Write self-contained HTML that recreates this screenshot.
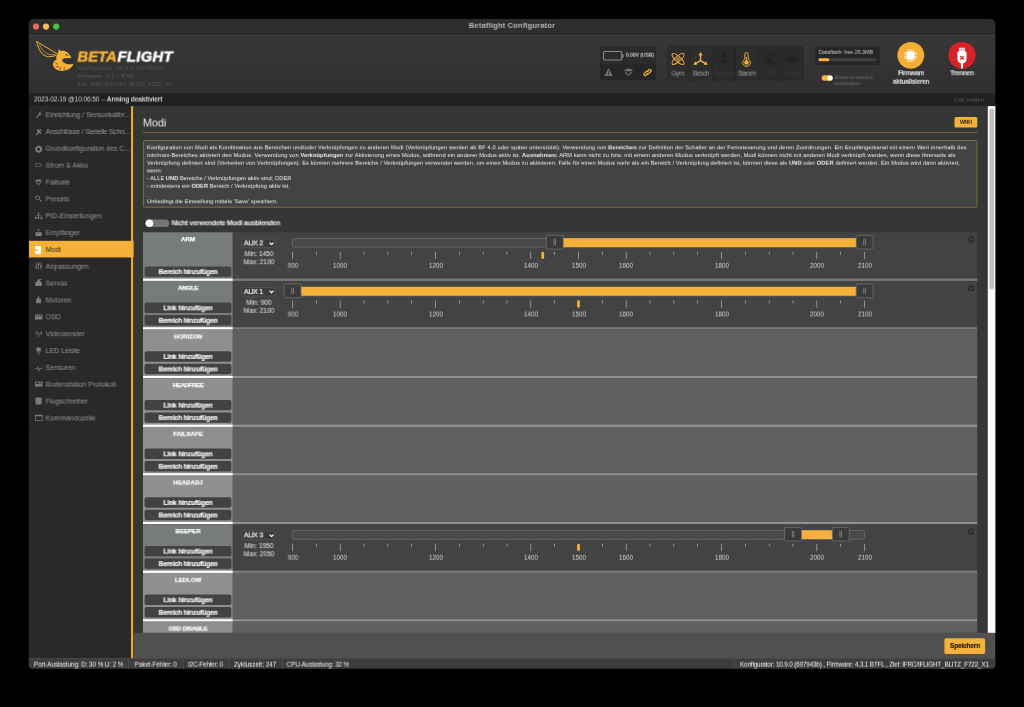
<!DOCTYPE html>
<html lang="de"><head><meta charset="utf-8"><title>Betaflight Configurator</title>
<style>
html,body{margin:0;padding:0;background:#000;width:1024px;height:707px;overflow:hidden}
body{font-family:"Liberation Sans",sans-serif;-webkit-font-smoothing:antialiased}
#w{position:absolute;left:0;top:0;width:1024px;height:707px;overflow:hidden;will-change:transform}
#w div,#w span,#w svg{position:absolute;display:block}
#w span.t{white-space:nowrap;font-family:"Liberation Sans",sans-serif}
#w span.t b{font-weight:700}

</style></head><body>
<div id="w">
<svg id="bg" width="1024" height="707" viewBox="0 0 1024 707" style="left:0;top:0"><defs><linearGradient id="g0" x1="0" y1="0" x2="0" y2="1"><stop offset="0" stop-color="#373737"/><stop offset="1" stop-color="#303030"/></linearGradient><clipPath id="wc"><path d="M33.7 19.0 H990.4 A5.0 5.0 0 0 1 995.4 24.0 V664.8 A4.0 4.0 0 0 1 991.4 668.8 H32.7 A4.0 4.0 0 0 1 28.7 664.8 V24.0 A5.0 5.0 0 0 1 33.7 19.0 Z"/></clipPath></defs>
<g clip-path="url(#wc)">
<rect x="28.00" y="19.00" width="968.00" height="15.00" fill="#2e2e2e"/>
<rect x="28.00" y="33.20" width="968.00" height="1.00" fill="#1f1f1f"/>
<rect x="28.00" y="34.00" width="968.00" height="59.00" fill="url(#g0)"/>
<rect x="28.00" y="93.00" width="968.00" height="13.10" fill="#212121"/>
<rect x="28.00" y="106.10" width="103.00" height="552.00" fill="#292929"/>
<rect x="131.00" y="106.10" width="2.40" height="552.00" fill="#e8ab3a"/>
<rect x="133.60" y="106.10" width="854.00" height="527.00" fill="#353736"/>
<rect x="987.70" y="106.10" width="9.00" height="527.00" fill="#fafafa"/>
<rect x="989.40" y="108.50" width="4.80" height="181.00" rx="2.50" fill="#c1c1c1"/>
<rect x="133.60" y="632.80" width="862.00" height="25.40" fill="#505050"/>
<rect x="28.00" y="658.10" width="968.00" height="11.00" fill="#3d3d3d"/>
<rect x="28.00" y="658.10" width="968.00" height="0.60" fill="#555"/>
<rect x="32.90" y="23.50" width="6.20" height="6.20" rx="3.10" fill="#ed6a5e"/>
<rect x="42.90" y="23.50" width="6.20" height="6.20" rx="3.10" fill="#f4bf4f"/>
<rect x="53.10" y="23.50" width="6.20" height="6.20" rx="3.10" fill="#45c13f"/>
<rect x="600.20" y="46.20" width="55.80" height="33.80" rx="2.50" fill="#2b2b2b"/>
<path d="M600.20 64.50 H656.00 V77.50 A2.50 2.50 0 0 1 653.50 80.00 H602.70 A2.50 2.50 0 0 1 600.20 77.50 V64.50 Z" fill="#262626"/>
<rect x="603.55" y="51.55" width="18.20" height="8.50" rx="1.05" fill="none" stroke="#8a8a8a" stroke-width="1.1"/>
<path d="M622.20 54.00 H622.60 A1.00 1.00 0 0 1 623.60 55.00 V56.60 A1.00 1.00 0 0 1 622.60 57.60 H622.20 V54.00 Z" fill="#8a8a8a"/>
<rect x="666.80" y="45.80" width="137.00" height="34.90" rx="2.50" fill="#2a2a2a"/>
<path d="M669.50 45.80 H689.80 V80.70 H669.50 A2.50 2.50 0 0 1 667.00 78.20 V48.30 A2.50 2.50 0 0 1 669.50 45.80 Z" fill="#2d2d2d"/>
<rect x="689.83" y="45.80" width="22.80" height="34.90" fill="#2d2d2d"/>
<rect x="689.63" y="45.80" width="0.60" height="34.90" fill="#222"/>
<rect x="690.23" y="45.80" width="0.50" height="34.90" fill="#323232"/>
<rect x="712.46" y="45.80" width="0.60" height="34.90" fill="#222"/>
<rect x="713.06" y="45.80" width="0.50" height="34.90" fill="#323232"/>
<rect x="735.49" y="45.80" width="22.80" height="34.90" fill="#2d2d2d"/>
<rect x="735.29" y="45.80" width="0.60" height="34.90" fill="#222"/>
<rect x="735.89" y="45.80" width="0.50" height="34.90" fill="#323232"/>
<rect x="758.12" y="45.80" width="0.60" height="34.90" fill="#222"/>
<rect x="758.72" y="45.80" width="0.50" height="34.90" fill="#323232"/>
<rect x="780.95" y="45.80" width="0.60" height="34.90" fill="#222"/>
<rect x="781.55" y="45.80" width="0.50" height="34.90" fill="#323232"/>
<rect x="815.20" y="46.70" width="64.50" height="18.40" rx="2.50" fill="#262626"/>
<rect x="818.40" y="58.20" width="58.00" height="3.00" rx="1.50" fill="#414141"/>
<rect x="818.40" y="58.20" width="10.80" height="3.00" rx="1.50" fill="#f5b13a"/>
<rect x="821.60" y="75.20" width="11.20" height="5.50" rx="2.80" fill="#f5b13a"/>
<rect x="827.40" y="75.40" width="5.20" height="5.10" rx="2.55" fill="#fff"/>
<rect x="897.40" y="41.90" width="26.80" height="26.80" rx="13.40" fill="#f4ae33"/>
<rect x="948.40" y="41.90" width="27.20" height="26.80" rx="13.40" fill="#d7222a"/>
<rect x="29.00" y="106.30" width="102.00" height="0.50" fill="#313131"/>
<rect x="29.00" y="122.55" width="102.00" height="0.60" fill="#272727"/>
<rect x="29.00" y="123.15" width="102.00" height="0.50" fill="#313131"/>
<rect x="29.00" y="139.40" width="102.00" height="0.60" fill="#272727"/>
<rect x="29.00" y="140.00" width="102.00" height="0.50" fill="#313131"/>
<rect x="29.00" y="156.25" width="102.00" height="0.60" fill="#272727"/>
<rect x="29.00" y="156.85" width="102.00" height="0.50" fill="#313131"/>
<rect x="29.00" y="173.10" width="102.00" height="0.60" fill="#272727"/>
<rect x="29.00" y="173.70" width="102.00" height="0.50" fill="#313131"/>
<rect x="29.00" y="189.95" width="102.00" height="0.60" fill="#272727"/>
<rect x="29.00" y="190.55" width="102.00" height="0.50" fill="#313131"/>
<rect x="29.00" y="206.80" width="102.00" height="0.60" fill="#272727"/>
<rect x="29.00" y="207.40" width="102.00" height="0.50" fill="#313131"/>
<rect x="29.00" y="223.65" width="102.00" height="0.60" fill="#272727"/>
<rect x="29.00" y="224.25" width="102.00" height="0.50" fill="#313131"/>
<rect x="29.00" y="240.50" width="102.00" height="0.60" fill="#272727"/>
<rect x="29.00" y="240.80" width="104.60" height="16.65" fill="#f5b13a"/>
<rect x="29.00" y="257.95" width="102.00" height="0.50" fill="#313131"/>
<rect x="29.00" y="274.20" width="102.00" height="0.60" fill="#272727"/>
<rect x="29.00" y="274.80" width="102.00" height="0.50" fill="#313131"/>
<rect x="29.00" y="291.05" width="102.00" height="0.60" fill="#272727"/>
<rect x="29.00" y="291.65" width="102.00" height="0.50" fill="#313131"/>
<rect x="29.00" y="307.90" width="102.00" height="0.60" fill="#272727"/>
<rect x="29.00" y="308.50" width="102.00" height="0.50" fill="#313131"/>
<rect x="29.00" y="324.75" width="102.00" height="0.60" fill="#272727"/>
<rect x="29.00" y="325.35" width="102.00" height="0.50" fill="#313131"/>
<rect x="29.00" y="341.60" width="102.00" height="0.60" fill="#272727"/>
<rect x="29.00" y="342.20" width="102.00" height="0.50" fill="#313131"/>
<rect x="29.00" y="358.45" width="102.00" height="0.60" fill="#272727"/>
<rect x="29.00" y="359.05" width="102.00" height="0.50" fill="#313131"/>
<rect x="29.00" y="375.30" width="102.00" height="0.60" fill="#272727"/>
<rect x="29.00" y="375.90" width="102.00" height="0.50" fill="#313131"/>
<rect x="29.00" y="392.15" width="102.00" height="0.60" fill="#272727"/>
<rect x="29.00" y="392.75" width="102.00" height="0.50" fill="#313131"/>
<rect x="29.00" y="409.00" width="102.00" height="0.60" fill="#272727"/>
<rect x="29.00" y="409.60" width="102.00" height="0.50" fill="#313131"/>
<rect x="29.00" y="425.85" width="102.00" height="0.60" fill="#272727"/>
<rect x="143.00" y="132.30" width="834.30" height="0.70" fill="#8f7432"/>
<rect x="954.50" y="117.10" width="22.80" height="10.50" rx="1.50" fill="#f5b13a"/>
<rect x="143.35" y="140.55" width="833.70" height="66.70" rx="1.15" fill="#434343" stroke="#938242" stroke-width="0.7"/>
<rect x="145.50" y="219.40" width="23.80" height="7.60" rx="3.80" fill="#757575"/>
<rect x="145.60" y="219.40" width="7.60" height="7.60" rx="3.80" fill="#fff"/>
<rect x="143.00" y="232.30" width="89.80" height="46.10" fill="#777c7a"/>
<rect x="232.80" y="232.30" width="744.40" height="48.70" fill="#434343"/>
<rect x="143.00" y="278.45" width="89.80" height="2.45" fill="#fff"/>
<rect x="232.80" y="278.60" width="744.40" height="2.30" fill="rgba(255,255,255,0.3)"/>
<rect x="144.60" y="266.40" width="86.80" height="10.40" rx="1.80" fill="#424242"/>
<rect x="241.60" y="239.00" width="33.30" height="8.30" rx="1.50" fill="#3a3a3a" stroke="#606060" stroke-width="0.6"/>
<rect x="292.50" y="238.50" width="572.20" height="8.70" rx="1.50" fill="#494949" stroke="#7b7b7b" stroke-width="0.6"/>
<rect x="554.67" y="238.20" width="309.84" height="8.90" fill="#f5b13a"/>
<rect x="546.32" y="235.35" width="16.90" height="13.70" rx="1.45" fill="#3b3b3b" stroke="#767676" stroke-width="0.7"/>
<rect x="553.57" y="238.90" width="0.80" height="6.40" fill="#8a8a8a"/>
<rect x="555.17" y="238.90" width="0.80" height="6.40" fill="#8a8a8a"/>
<rect x="856.15" y="235.35" width="16.90" height="13.70" rx="1.45" fill="#3b3b3b" stroke="#767676" stroke-width="0.7"/>
<rect x="863.40" y="238.90" width="0.80" height="6.40" fill="#8a8a8a"/>
<rect x="865.00" y="238.90" width="0.80" height="6.40" fill="#8a8a8a"/>
<rect x="292.20" y="251.80" width="0.60" height="7.40" fill="#c6c6c6"/>
<rect x="316.03" y="251.80" width="0.60" height="2.90" fill="#c6c6c6"/>
<rect x="339.87" y="251.80" width="0.60" height="7.40" fill="#c6c6c6"/>
<rect x="363.70" y="251.80" width="0.60" height="2.90" fill="#c6c6c6"/>
<rect x="387.53" y="251.80" width="0.60" height="2.90" fill="#c6c6c6"/>
<rect x="411.37" y="251.80" width="0.60" height="2.90" fill="#c6c6c6"/>
<rect x="435.20" y="251.80" width="0.60" height="7.40" fill="#c6c6c6"/>
<rect x="459.03" y="251.80" width="0.60" height="2.90" fill="#c6c6c6"/>
<rect x="482.87" y="251.80" width="0.60" height="2.90" fill="#c6c6c6"/>
<rect x="506.70" y="251.80" width="0.60" height="2.90" fill="#c6c6c6"/>
<rect x="530.54" y="251.80" width="0.60" height="7.40" fill="#c6c6c6"/>
<rect x="554.37" y="251.80" width="0.60" height="2.90" fill="#c6c6c6"/>
<rect x="578.20" y="251.80" width="0.60" height="7.40" fill="#c6c6c6"/>
<rect x="602.04" y="251.80" width="0.60" height="2.90" fill="#c6c6c6"/>
<rect x="625.87" y="251.80" width="0.60" height="7.40" fill="#c6c6c6"/>
<rect x="649.70" y="251.80" width="0.60" height="2.90" fill="#c6c6c6"/>
<rect x="673.54" y="251.80" width="0.60" height="2.90" fill="#c6c6c6"/>
<rect x="697.37" y="251.80" width="0.60" height="2.90" fill="#c6c6c6"/>
<rect x="721.20" y="251.80" width="0.60" height="7.40" fill="#c6c6c6"/>
<rect x="745.04" y="251.80" width="0.60" height="2.90" fill="#c6c6c6"/>
<rect x="768.87" y="251.80" width="0.60" height="2.90" fill="#c6c6c6"/>
<rect x="792.70" y="251.80" width="0.60" height="2.90" fill="#c6c6c6"/>
<rect x="816.54" y="251.80" width="0.60" height="7.40" fill="#c6c6c6"/>
<rect x="840.37" y="251.80" width="0.60" height="2.90" fill="#c6c6c6"/>
<rect x="864.20" y="251.80" width="0.60" height="7.40" fill="#c6c6c6"/>
<rect x="541.35" y="251.70" width="2.80" height="7.20" rx="1.40" fill="#f5b13a"/>
<rect x="143.00" y="280.97" width="89.80" height="46.10" fill="#777c7a"/>
<rect x="232.80" y="280.97" width="744.40" height="48.70" fill="#434343"/>
<rect x="143.00" y="327.12" width="89.80" height="2.45" fill="#fff"/>
<rect x="232.80" y="327.27" width="744.40" height="2.30" fill="rgba(255,255,255,0.3)"/>
<rect x="144.60" y="302.57" width="86.80" height="10.40" rx="1.80" fill="#424242"/>
<rect x="144.60" y="315.07" width="86.80" height="10.40" rx="1.80" fill="#424242"/>
<rect x="241.60" y="287.67" width="33.30" height="8.30" rx="1.50" fill="#3a3a3a" stroke="#606060" stroke-width="0.6"/>
<rect x="292.50" y="287.17" width="572.20" height="8.70" rx="1.50" fill="#494949" stroke="#7b7b7b" stroke-width="0.6"/>
<rect x="292.50" y="286.87" width="572.00" height="8.90" fill="#f5b13a"/>
<rect x="284.15" y="284.02" width="16.90" height="13.70" rx="1.45" fill="#3b3b3b" stroke="#767676" stroke-width="0.7"/>
<rect x="291.40" y="287.57" width="0.80" height="6.40" fill="#8a8a8a"/>
<rect x="293.00" y="287.57" width="0.80" height="6.40" fill="#8a8a8a"/>
<rect x="856.15" y="284.02" width="16.90" height="13.70" rx="1.45" fill="#3b3b3b" stroke="#767676" stroke-width="0.7"/>
<rect x="863.40" y="287.57" width="0.80" height="6.40" fill="#8a8a8a"/>
<rect x="865.00" y="287.57" width="0.80" height="6.40" fill="#8a8a8a"/>
<rect x="292.20" y="300.47" width="0.60" height="7.40" fill="#c6c6c6"/>
<rect x="316.03" y="300.47" width="0.60" height="2.90" fill="#c6c6c6"/>
<rect x="339.87" y="300.47" width="0.60" height="7.40" fill="#c6c6c6"/>
<rect x="363.70" y="300.47" width="0.60" height="2.90" fill="#c6c6c6"/>
<rect x="387.53" y="300.47" width="0.60" height="2.90" fill="#c6c6c6"/>
<rect x="411.37" y="300.47" width="0.60" height="2.90" fill="#c6c6c6"/>
<rect x="435.20" y="300.47" width="0.60" height="7.40" fill="#c6c6c6"/>
<rect x="459.03" y="300.47" width="0.60" height="2.90" fill="#c6c6c6"/>
<rect x="482.87" y="300.47" width="0.60" height="2.90" fill="#c6c6c6"/>
<rect x="506.70" y="300.47" width="0.60" height="2.90" fill="#c6c6c6"/>
<rect x="530.54" y="300.47" width="0.60" height="7.40" fill="#c6c6c6"/>
<rect x="554.37" y="300.47" width="0.60" height="2.90" fill="#c6c6c6"/>
<rect x="578.20" y="300.47" width="0.60" height="7.40" fill="#c6c6c6"/>
<rect x="602.04" y="300.47" width="0.60" height="2.90" fill="#c6c6c6"/>
<rect x="625.87" y="300.47" width="0.60" height="7.40" fill="#c6c6c6"/>
<rect x="649.70" y="300.47" width="0.60" height="2.90" fill="#c6c6c6"/>
<rect x="673.54" y="300.47" width="0.60" height="2.90" fill="#c6c6c6"/>
<rect x="697.37" y="300.47" width="0.60" height="2.90" fill="#c6c6c6"/>
<rect x="721.20" y="300.47" width="0.60" height="7.40" fill="#c6c6c6"/>
<rect x="745.04" y="300.47" width="0.60" height="2.90" fill="#c6c6c6"/>
<rect x="768.87" y="300.47" width="0.60" height="2.90" fill="#c6c6c6"/>
<rect x="792.70" y="300.47" width="0.60" height="2.90" fill="#c6c6c6"/>
<rect x="816.54" y="300.47" width="0.60" height="7.40" fill="#c6c6c6"/>
<rect x="840.37" y="300.47" width="0.60" height="2.90" fill="#c6c6c6"/>
<rect x="864.20" y="300.47" width="0.60" height="7.40" fill="#c6c6c6"/>
<rect x="577.10" y="300.37" width="2.80" height="7.20" rx="1.40" fill="#f5b13a"/>
<rect x="143.00" y="329.64" width="89.80" height="46.10" fill="#8f8f8f"/>
<rect x="232.80" y="329.64" width="744.40" height="48.70" fill="#606060"/>
<rect x="143.00" y="375.79" width="89.80" height="2.45" fill="#fff"/>
<rect x="232.80" y="375.94" width="744.40" height="2.30" fill="rgba(255,255,255,0.3)"/>
<rect x="144.60" y="351.24" width="86.80" height="10.40" rx="1.80" fill="#424242"/>
<rect x="144.60" y="363.74" width="86.80" height="10.40" rx="1.80" fill="#424242"/>
<rect x="143.00" y="378.31" width="89.80" height="46.10" fill="#8f8f8f"/>
<rect x="232.80" y="378.31" width="744.40" height="48.70" fill="#606060"/>
<rect x="143.00" y="424.46" width="89.80" height="2.45" fill="#fff"/>
<rect x="232.80" y="424.61" width="744.40" height="2.30" fill="rgba(255,255,255,0.3)"/>
<rect x="144.60" y="399.91" width="86.80" height="10.40" rx="1.80" fill="#424242"/>
<rect x="144.60" y="412.41" width="86.80" height="10.40" rx="1.80" fill="#424242"/>
<rect x="143.00" y="426.98" width="89.80" height="46.10" fill="#8f8f8f"/>
<rect x="232.80" y="426.98" width="744.40" height="48.70" fill="#606060"/>
<rect x="143.00" y="473.13" width="89.80" height="2.45" fill="#fff"/>
<rect x="232.80" y="473.28" width="744.40" height="2.30" fill="rgba(255,255,255,0.3)"/>
<rect x="144.60" y="448.58" width="86.80" height="10.40" rx="1.80" fill="#424242"/>
<rect x="144.60" y="461.08" width="86.80" height="10.40" rx="1.80" fill="#424242"/>
<rect x="143.00" y="475.65" width="89.80" height="46.10" fill="#8f8f8f"/>
<rect x="232.80" y="475.65" width="744.40" height="48.70" fill="#606060"/>
<rect x="143.00" y="521.80" width="89.80" height="2.45" fill="#fff"/>
<rect x="232.80" y="521.95" width="744.40" height="2.30" fill="rgba(255,255,255,0.3)"/>
<rect x="144.60" y="497.25" width="86.80" height="10.40" rx="1.80" fill="#424242"/>
<rect x="144.60" y="509.75" width="86.80" height="10.40" rx="1.80" fill="#424242"/>
<rect x="143.00" y="524.32" width="89.80" height="46.10" fill="#777c7a"/>
<rect x="232.80" y="524.32" width="744.40" height="48.70" fill="#434343"/>
<rect x="143.00" y="570.47" width="89.80" height="2.45" fill="#fff"/>
<rect x="232.80" y="570.62" width="744.40" height="2.30" fill="rgba(255,255,255,0.3)"/>
<rect x="144.60" y="545.92" width="86.80" height="10.40" rx="1.80" fill="#424242"/>
<rect x="144.60" y="558.42" width="86.80" height="10.40" rx="1.80" fill="#424242"/>
<rect x="241.60" y="531.02" width="33.30" height="8.30" rx="1.50" fill="#3a3a3a" stroke="#606060" stroke-width="0.6"/>
<rect x="292.50" y="530.52" width="572.20" height="8.70" rx="1.50" fill="#494949" stroke="#7b7b7b" stroke-width="0.6"/>
<rect x="793.00" y="530.22" width="47.67" height="8.90" fill="#f5b13a"/>
<rect x="784.65" y="527.37" width="16.90" height="13.70" rx="1.45" fill="#3b3b3b" stroke="#767676" stroke-width="0.7"/>
<rect x="791.90" y="530.92" width="0.80" height="6.40" fill="#8a8a8a"/>
<rect x="793.50" y="530.92" width="0.80" height="6.40" fill="#8a8a8a"/>
<rect x="832.32" y="527.37" width="16.90" height="13.70" rx="1.45" fill="#3b3b3b" stroke="#767676" stroke-width="0.7"/>
<rect x="839.57" y="530.92" width="0.80" height="6.40" fill="#8a8a8a"/>
<rect x="841.17" y="530.92" width="0.80" height="6.40" fill="#8a8a8a"/>
<rect x="292.20" y="543.82" width="0.60" height="7.40" fill="#c6c6c6"/>
<rect x="316.03" y="543.82" width="0.60" height="2.90" fill="#c6c6c6"/>
<rect x="339.87" y="543.82" width="0.60" height="7.40" fill="#c6c6c6"/>
<rect x="363.70" y="543.82" width="0.60" height="2.90" fill="#c6c6c6"/>
<rect x="387.53" y="543.82" width="0.60" height="2.90" fill="#c6c6c6"/>
<rect x="411.37" y="543.82" width="0.60" height="2.90" fill="#c6c6c6"/>
<rect x="435.20" y="543.82" width="0.60" height="7.40" fill="#c6c6c6"/>
<rect x="459.03" y="543.82" width="0.60" height="2.90" fill="#c6c6c6"/>
<rect x="482.87" y="543.82" width="0.60" height="2.90" fill="#c6c6c6"/>
<rect x="506.70" y="543.82" width="0.60" height="2.90" fill="#c6c6c6"/>
<rect x="530.54" y="543.82" width="0.60" height="7.40" fill="#c6c6c6"/>
<rect x="554.37" y="543.82" width="0.60" height="2.90" fill="#c6c6c6"/>
<rect x="578.20" y="543.82" width="0.60" height="7.40" fill="#c6c6c6"/>
<rect x="602.04" y="543.82" width="0.60" height="2.90" fill="#c6c6c6"/>
<rect x="625.87" y="543.82" width="0.60" height="7.40" fill="#c6c6c6"/>
<rect x="649.70" y="543.82" width="0.60" height="2.90" fill="#c6c6c6"/>
<rect x="673.54" y="543.82" width="0.60" height="2.90" fill="#c6c6c6"/>
<rect x="697.37" y="543.82" width="0.60" height="2.90" fill="#c6c6c6"/>
<rect x="721.20" y="543.82" width="0.60" height="7.40" fill="#c6c6c6"/>
<rect x="745.04" y="543.82" width="0.60" height="2.90" fill="#c6c6c6"/>
<rect x="768.87" y="543.82" width="0.60" height="2.90" fill="#c6c6c6"/>
<rect x="792.70" y="543.82" width="0.60" height="2.90" fill="#c6c6c6"/>
<rect x="816.54" y="543.82" width="0.60" height="7.40" fill="#c6c6c6"/>
<rect x="840.37" y="543.82" width="0.60" height="2.90" fill="#c6c6c6"/>
<rect x="864.20" y="543.82" width="0.60" height="7.40" fill="#c6c6c6"/>
<rect x="577.10" y="543.72" width="2.80" height="7.20" rx="1.40" fill="#f5b13a"/>
<rect x="143.00" y="572.99" width="89.80" height="46.10" fill="#8f8f8f"/>
<rect x="232.80" y="572.99" width="744.40" height="48.70" fill="#606060"/>
<rect x="143.00" y="619.14" width="89.80" height="2.45" fill="#fff"/>
<rect x="232.80" y="619.29" width="744.40" height="2.30" fill="rgba(255,255,255,0.3)"/>
<rect x="144.60" y="594.59" width="86.80" height="10.40" rx="1.80" fill="#424242"/>
<rect x="144.60" y="607.09" width="86.80" height="10.40" rx="1.80" fill="#424242"/>
<rect x="143.00" y="621.66" width="89.80" height="11.14" fill="#8f8f8f"/>
<rect x="232.80" y="621.66" width="744.40" height="11.14" fill="#606060"/>
<rect x="944.40" y="638.20" width="40.70" height="15.80" rx="1.80" fill="#f5b13a"/>
<rect x="128.50" y="658.60" width="0.60" height="10.40" fill="#5a5a5a"/>
<rect x="182.60" y="658.60" width="0.60" height="10.40" fill="#5a5a5a"/>
<rect x="228.80" y="658.60" width="0.60" height="10.40" fill="#5a5a5a"/>
<rect x="281.90" y="658.60" width="0.60" height="10.40" fill="#5a5a5a"/>
<rect x="734.40" y="658.60" width="0.60" height="10.40" fill="#5a5a5a"/>
</g></svg>
<span class="t" style="left:512.00px;transform:perspective(1000px) translate3d(-50%,0.85px,0.01px);top:21px;font-size:7.5px;line-height:7.5px;font-weight:700;color:#b8b8b8;letter-spacing:0.188px;">Betaflight Configurator</span>
<svg style="left:32.00px;top:36.00px;" width="50" height="40" viewBox="32 36 50 40">
<g fill="none" stroke="#f0ae38" stroke-linejoin="round" stroke-linecap="round">
<path d="M36.8 41.7 L58.4 54.6 M36.8 41.7 C37.2 45.5 39 50.2 42.6 54.2 C45.6 57 50.5 57.6 56.2 55.3" stroke-width="1"/>
<path d="M39.4 44.9 C41 48.5 44 52.6 48 54.2 C50.5 55 53 54.9 54.8 54.4" stroke-width="0.7"/>
</g>
<path d="M58.6 49.2 L60.6 51.1 C64.2 49.6 69 52 71.5 57.9 L66 58.3 C64 58 62.7 58.6 62.3 59.8 C62 61.5 63.2 62.7 65.4 63.4 C68 64.2 71 64.4 73.4 64.1 C71.8 68 67.5 71 62 71 C57.5 71 53.4 68.6 53 64.6 C52.8 62 54.5 60.3 56.6 59.4 C55.9 57.6 56.3 55.8 57.6 54.4 C58.2 52.8 58.3 51 58.6 49.2 Z" fill="#f5b13a"/>
<path d="M65.6 53.5 L69.2 56 L66 55.3 Z" fill="#343434"/>
<path d="M55.2 62.2 L58 64.6 M55.6 66.6 L59 67 M59.4 70 L61.2 66.8 M64 70.4 L64.4 67.4" stroke="#343434" stroke-width="0.7" fill="none"/>
</svg>
<span class="t" style="left:77px;transform:perspective(1000px) translate3d(0.40px,0.56px,0.01px);top:49px;font-size:14.8px;line-height:14.8px;font-weight:700;color:#f5b13a;letter-spacing:0.032px;font-style:italic;-webkit-text-stroke:0.55px #f5b13a;">BETA</span>
<span class="t" style="left:117px;transform:perspective(1000px) translate3d(0.50px,0.56px,0.01px);top:49px;font-size:14.8px;line-height:14.8px;font-weight:700;color:#fff;letter-spacing:0.320px;font-style:italic;-webkit-text-stroke:0.55px #fff;">FLIGHT</span>
<span class="t" style="left:77px;transform:perspective(1000px) translate3d(0.50px,0.81px,0.01px);top:65px;font-size:5.6px;line-height:5.6px;font-weight:400;color:#5a5a5a;letter-spacing:0.366px;">Konfigurator: 10.9.0 (697943b)</span>
<span class="t" style="left:77px;transform:perspective(1000px) translate3d(0.50px,0.91px,0.01px);top:73px;font-size:5.6px;line-height:5.6px;font-weight:400;color:#5a5a5a;letter-spacing:0.200px;">Firmware: 4.3.1 BTFL</span>
<span class="t" style="left:77px;transform:perspective(1000px) translate3d(0.50px,0.91px,0.01px);top:81px;font-size:5.6px;line-height:5.6px;font-weight:400;color:#5a5a5a;letter-spacing:0.053px;">Ziel: IFRC/IFLIGHT_BLITZ_F722_X1</span>
<span class="t" style="left:626px;transform:perspective(1000px) translate3d(0.00px,0.71px,0.01px);top:52px;font-size:5.2px;line-height:5.2px;font-weight:700;color:#c8c8c8;letter-spacing:-0.134px;">0.00V (USB)</span>
<svg style="left:604.20px;top:68.20px;" width="9" height="8.4" viewBox="0 0 9 8.4"><path d="M4.5 0.3 L8.8 8 L0.2 8 Z" fill="#707070"/><path d="M4.5 2.8 L4.5 5.6 M4.5 6.4 L4.5 7.2" stroke="#262626" stroke-width="0.9"/></svg>
<svg style="left:623.60px;top:68.20px;" width="9" height="8.6" viewBox="0 0 9 8.6"><path d="M0.3 3.6 C0.6 -0.6 8.4 -0.6 8.7 3.6 C7.5 2.9 6.6 2.9 5.9 3.6 C5.2 2.9 3.8 2.9 3.1 3.6 C2.4 2.9 1.5 2.9 0.3 3.6 Z M0.5 4.2 L4.5 8.4 L8.5 4.2 L6 4.3 L4.5 7.6 L3 4.3 Z" fill="#707070"/></svg>
<svg style="left:642.70px;top:68.00px;" width="9" height="9" viewBox="0 0 10 10"><g fill="none" stroke="#e0a53a" stroke-width="1.5" stroke-linecap="round"><path d="M4.2 5.8 L2.9 7.1 A1.4 1.4 0 0 1 0.9 5.1 L2.9 3.1 A1.4 1.4 0 0 1 4.9 3.1" transform="translate(0.6,0.9)"/><path d="M5.8 4.2 L7.1 2.9 A1.4 1.4 0 0 1 9.1 4.9 L7.1 6.9 A1.4 1.4 0 0 1 5.1 6.9" transform="translate(-0.6,-0.9)"/></g></svg>
<span class="t" style="left:678.40px;transform:perspective(1000px) translate3d(-50%,0.59px,0.01px);top:70px;font-size:6.4px;line-height:6.4px;font-weight:400;color:#a0a0a0;letter-spacing:-0.160px;">Gyro</span>
<span class="t" style="left:701.23px;transform:perspective(1000px) translate3d(-50%,0.59px,0.01px);top:70px;font-size:6.4px;line-height:6.4px;font-weight:400;color:#a0a0a0;letter-spacing:-0.348px;">Besch</span>
<span class="t" style="left:724.06px;transform:perspective(1000px) translate3d(-50%,0.59px,0.01px);top:70px;font-size:6.4px;line-height:6.4px;font-weight:400;color:#3a3a3a;letter-spacing:0.000px;">Magn</span>
<span class="t" style="left:746.89px;transform:perspective(1000px) translate3d(-50%,0.59px,0.01px);top:70px;font-size:6.4px;line-height:6.4px;font-weight:400;color:#a0a0a0;letter-spacing:-0.406px;">Barom</span>
<span class="t" style="left:769.72px;transform:perspective(1000px) translate3d(-50%,0.59px,0.01px);top:70px;font-size:6.4px;line-height:6.4px;font-weight:400;color:#3a3a3a;letter-spacing:0.000px;">GPS</span>
<span class="t" style="left:792.55px;transform:perspective(1000px) translate3d(-50%,0.59px,0.01px);top:70px;font-size:6.4px;line-height:6.4px;font-weight:400;color:#3a3a3a;letter-spacing:0.000px;">Sonar</span>
<svg style="left:671.40px;top:52.20px;overflow:visible" width="14" height="14" viewBox="0 0 14 14"><g fill="none" stroke="#f5b13a" stroke-width="0.95"><ellipse cx="7" cy="7" rx="7.6" ry="2.6" transform="rotate(42 7 7)"/><ellipse cx="7" cy="7" rx="7.6" ry="2.6" transform="rotate(-42 7 7)"/><circle cx="7" cy="7" r="1.2"/></g></svg>
<svg style="left:692.90px;top:51.70px;" width="15" height="14" viewBox="0 0 14 13"><g fill="none" stroke="#f5b13a" stroke-width="1.2" stroke-linecap="round"><path d="M7 8 L7 1.6 M7 8 L1.8 11 M7 8 L12.2 11"/></g><path d="M7 0 L9 3.2 L5 3.2 Z M0.3 11.9 L2 8.6 L3.9 11.8 Z M13.7 11.9 L12 8.6 L10.1 11.8 Z" fill="#f5b13a"/></svg>
<svg style="left:720.00px;top:52.40px;" width="8" height="13" viewBox="0 0 8 12"><path d="M4 0 L7.5 5 L0.5 5 Z M0.8 6.4 L7.2 6.4 L4 12 Z" fill="#222222"/></svg>
<svg style="left:742.30px;top:51.80px;" width="9" height="15" viewBox="0 0 9 15"><path d="M4.5 0.6 A1.7 1.7 0 0 1 6.2 2.3 L6.2 7.2 A3.8 3.8 0 1 1 2.8 7.2 L2.8 2.3 A1.7 1.7 0 0 1 4.5 0.6 Z" fill="none" stroke="#f5b13a" stroke-width="0.95"/><circle cx="4.5" cy="10.5" r="2.3" fill="#f5b13a"/><rect x="4.05" y="5" width="0.9" height="4" fill="#f5b13a"/></svg>
<svg style="left:763.40px;top:52.60px;" width="13" height="13" viewBox="0 0 12 12"><g fill="none" stroke="#222222" stroke-width="1.5"><path d="M2 4 A5 5 0 0 1 10 4"/><path d="M1 8 A6 4 0 0 0 11 8"/></g><circle cx="6" cy="6.4" r="2.3" fill="#222222"/></svg>
<svg style="left:784.80px;top:53.60px;" width="15" height="11.5" viewBox="0 0 13 10"><g fill="none" stroke="#222222" stroke-width="1.4"><path d="M0 3.5 Q6.5 10 13 3.5"/><path d="M2.2 2 Q6.5 6.4 10.8 2"/><path d="M4.5 0.5 Q6.5 3 8.5 0.5"/></g></svg>
<span class="t" style="left:818px;transform:perspective(1000px) translate3d(0.80px,0.86px,0.01px);top:49px;font-size:5.5px;line-height:5.5px;font-weight:400;color:#c8c8c8;letter-spacing:-0.096px;">Dataflash: free 26.3MB</span>
<span class="t" style="left:835px;transform:perspective(1000px) translate3d(0.00px,0.06px,0.01px);top:75px;font-size:5.5px;line-height:5.5px;font-weight:400;color:#6a6a6a;letter-spacing:-0.043px;">Expertenmodus</span>
<span class="t" style="left:833px;transform:perspective(1000px) translate3d(0.80px,0.16px,0.01px);top:81px;font-size:5.5px;line-height:5.5px;font-weight:400;color:#6a6a6a;letter-spacing:-0.060px;">einschalten</span>
<svg style="left:904.30px;top:49.00px;" width="13" height="13" viewBox="0 0 13 13"><rect x="3.55" y="0" width="0.75" height="13" fill="#fff" opacity="0.9"/><rect y="3.55" x="0" height="0.75" width="13" fill="#fff" opacity="0.9"/><rect x="5.28" y="0" width="0.75" height="13" fill="#fff" opacity="0.9"/><rect y="5.28" x="0" height="0.75" width="13" fill="#fff" opacity="0.9"/><rect x="7.01" y="0" width="0.75" height="13" fill="#fff" opacity="0.9"/><rect y="7.01" x="0" height="0.75" width="13" fill="#fff" opacity="0.9"/><rect x="8.74" y="0" width="0.75" height="13" fill="#fff" opacity="0.9"/><rect y="8.74" x="0" height="0.75" width="13" fill="#fff" opacity="0.9"/><rect x="2.5" y="2.5" width="8" height="8" rx="1.5" fill="#fff"/></svg>
<span class="t" style="left:910.80px;transform:perspective(1000px) translate3d(-50%,0.19px,0.01px);top:70px;font-size:6.6px;line-height:6.6px;font-weight:700;color:#e4e4e4;letter-spacing:-0.417px;">Firmware</span>
<span class="t" style="left:910.80px;transform:perspective(1000px) translate3d(-50%,0.79px,0.01px);top:78px;font-size:6.6px;line-height:6.6px;font-weight:700;color:#e4e4e4;letter-spacing:-0.306px;">aktualisieren</span>
<svg style="left:956.90px;top:46.60px;" width="10" height="22" viewBox="0 0 10 22"><path d="M2.2 0.7 H7.8 V4.4 H8.4 Q9.6 4.4 9.6 5.6 V11.5 Q9.6 15.5 6 16.6 V21.4 H4 V16.6 Q0.4 15.5 0.4 11.5 V5.6 Q0.4 4.4 1.6 4.4 H2.2 Z" fill="#fff"/><rect x="3.2" y="1.7" width="3.6" height="1.8" fill="#d7222a" opacity="0.45"/><path d="M3.3 9.1 L6.7 12.5 M6.7 9.1 L3.3 12.5" stroke="#d7222a" stroke-width="1.25"/></svg>
<span class="t" style="left:962.00px;transform:perspective(1000px) translate3d(-50%,0.19px,0.01px);top:70px;font-size:6.6px;line-height:6.6px;font-weight:700;color:#e4e4e4;letter-spacing:-0.316px;">Trennen</span>
<span class="t" style="left:34px;transform:perspective(1000px) translate3d(0.00px,0.49px,0.01px);top:96px;font-size:6.6px;line-height:6.6px;font-weight:400;color:#d0d0d0;letter-spacing:-0.132px;">2023-02-19 @10:06:50 -- <b>Arming deaktiviert</b></span>
<span class="t" style="right:40.20px;transform:perspective(1000px) translate3d(0,0.40px,0.01px);top:96px;font-size:6.2px;line-height:6.2px;font-weight:400;color:#5c5c5c;letter-spacing:0.000px;">Log zeigen</span>
<span class="t" style="left:45px;transform:perspective(1000px) translate3d(0.60px,0.11px,0.01px);top:111px;font-size:7px;line-height:7px;font-weight:400;color:#989898;letter-spacing:-0.029px;">Einrichtung / Sensorkalibr...</span>
<svg style="left:35.40px;top:110.82px;" width="7.6" height="8.2" viewBox="0 0 7.6 8.2"><g fill="#7c7c7c"><path d="M0.8 6.2 L4 3 A1.9 1.9 0 0 1 6.3 0.6 L5.1 1.8 L5.6 2.6 L6.4 2.9 L7 2 A1.9 1.9 0 0 1 4.9 3.9 L1.7 7.1 Z" /></g></svg>
<span class="t" style="left:45px;transform:perspective(1000px) translate3d(0.60px,0.96px,0.01px);top:127px;font-size:7px;line-height:7px;font-weight:400;color:#989898;letter-spacing:-0.152px;">Anschlüsse / Serielle Schn...</span>
<svg style="left:35.40px;top:127.68px;" width="7.6" height="8.2" viewBox="0 0 7.6 8.2"><g fill="#7c7c7c"><path d="M0.5 6.8 L2.8 4.2 L1.8 2.4 L3.4 0.8 L4.2 2.2 L6 1 L6.8 2 L5 3.6 L6.6 5 L5.6 6 L3.8 5 L1.4 7.4 Z"/></g></svg>
<span class="t" style="left:45px;transform:perspective(1000px) translate3d(0.60px,0.81px,0.01px);top:144px;font-size:7px;line-height:7px;font-weight:400;color:#989898;letter-spacing:-0.046px;">Grundkonfiguration des C...</span>
<svg style="left:35.40px;top:144.53px;" width="7.6" height="8.2" viewBox="0 0 7.6 8.2"><g fill="#7c7c7c"><path d="M3.5 0.2 L4.3 0.3 L4.6 1.2 L5.4 1.6 L6.2 1.2 L6.9 2 L6.4 2.8 L6.7 3.6 L7.5 3.9 L7.5 4.9 L6.7 5.1 L6.3 5.9 L6.7 6.7 L6 7.4 L5.2 7 L4.4 7.3 L4.1 8.1 L3.1 8.1 L2.8 7.3 L2 6.9 L1.2 7.3 L0.5 6.6 L0.9 5.8 L0.6 5 L-0.2 4.7 L-0.2 3.7 L0.6 3.5 L1 2.7 L0.6 1.9 L1.3 1.2 L2.1 1.6 L2.9 1.3 Z M3.6 2.7 A1.5 1.5 0 1 0 3.61 2.7 Z" fill-rule="evenodd"/></g></svg>
<span class="t" style="left:45px;transform:perspective(1000px) translate3d(0.60px,0.66px,0.01px);top:161px;font-size:7px;line-height:7px;font-weight:400;color:#989898;letter-spacing:0.000px;">Strom &amp; Akku</span>
<svg style="left:35.40px;top:161.38px;" width="7.6" height="8.2" viewBox="0 0 7.6 8.2"><g fill="#5c5c5c"><path d="M0 2.2 H6.4 V5.8 H0 Z M0.8 3 V5 H5.6 V3 Z M6.4 3.2 H7.2 V4.8 H6.4 Z" fill-rule="evenodd"/></g></svg>
<span class="t" style="left:45px;transform:perspective(1000px) translate3d(0.60px,0.51px,0.01px);top:178px;font-size:7px;line-height:7px;font-weight:400;color:#989898;letter-spacing:0.000px;">Failsafe</span>
<svg style="left:35.40px;top:178.22px;" width="7.6" height="8.2" viewBox="0 0 7.6 8.2"><g fill="#7c7c7c"><path d="M0.2 3.4 C0.5 0.6 6.5 0.6 6.8 3.4 Z M0.6 4 L3.5 7.6 L6.4 4 L5 4 L3.5 6.6 L2 4 Z"/></g></svg>
<span class="t" style="left:45px;transform:perspective(1000px) translate3d(0.60px,0.36px,0.01px);top:195px;font-size:7px;line-height:7px;font-weight:400;color:#989898;letter-spacing:0.000px;">Presets</span>
<svg style="left:35.40px;top:195.08px;" width="7.6" height="8.2" viewBox="0 0 7.6 8.2"><g fill="#7c7c7c"><path d="M2.6 0.4 A2.3 2.3 0 1 0 2.61 0.4 Z M2.6 1.2 A1.5 1.5 0 1 1 2.59 1.2 Z M4 4.6 L4.7 3.9 L7.2 6.4 L6.5 7.1 Z" fill-rule="evenodd"/></g></svg>
<span class="t" style="left:45px;transform:perspective(1000px) translate3d(0.60px,0.21px,0.01px);top:212px;font-size:7px;line-height:7px;font-weight:400;color:#989898;letter-spacing:0.000px;">PID-Einstellungen</span>
<svg style="left:35.40px;top:211.93px;" width="7.6" height="8.2" viewBox="0 0 7.6 8.2"><g fill="#7c7c7c"><path d="M2.8 0.4 H4.4 V2 H4 V3.4 H6.6 V5.2 H7.2 V7 H5.4 V5.2 H6 V4 H4 V5.2 H4.4 V7 H2.8 V5.2 H3.2 V4 H1.2 V5.2 H1.8 V7 H0 V5.2 H0.6 V3.4 H3.2 V2 H2.8 Z"/></g></svg>
<span class="t" style="left:45px;transform:perspective(1000px) translate3d(0.60px,0.06px,0.01px);top:229px;font-size:7px;line-height:7px;font-weight:400;color:#989898;letter-spacing:0.000px;">Empfänger</span>
<svg style="left:35.40px;top:228.78px;" width="7.6" height="8.2" viewBox="0 0 7.6 8.2"><g fill="#7c7c7c"><path d="M0.4 3.2 H6.8 V7 H0.4 Z M3.3 3.2 L3.3 1 L3.9 1 L3.9 3.2 Z M2.2 0.8 A1.6 1.6 0 0 1 5 0.8 L4.6 1.2 A1.1 1.1 0 0 0 2.6 1.2 Z"/></g></svg>
<span class="t" style="left:45px;transform:perspective(1000px) translate3d(0.60px,0.91px,0.01px);top:245px;font-size:7px;line-height:7px;font-weight:400;color:#222;letter-spacing:0.000px;">Modi</span>
<svg style="left:35.40px;top:245.63px;" width="7.6" height="8.2" viewBox="0 0 7.6 8.2"><g fill="#fff"><path d="M1 0 H5 A1 1 0 0 1 6 1 V7 A1 1 0 0 1 5 8 H1 A1 1 0 0 1 0 7 V1 A1 1 0 0 1 1 0 Z"/><rect x="0" y="3.4" width="3" height="1.4" fill="#f5b13a"/></g></svg>
<span class="t" style="left:45px;transform:perspective(1000px) translate3d(0.60px,0.76px,0.01px);top:262px;font-size:7px;line-height:7px;font-weight:400;color:#989898;letter-spacing:0.000px;">Anpassungen</span>
<svg style="left:35.40px;top:262.48px;" width="7.6" height="8.2" viewBox="0 0 7.6 8.2"><g fill="#7c7c7c"><path d="M0.8 0.4 H1.6 V7.4 H0.8 Z M3.2 0.4 H4 V7.4 H3.2 Z M5.6 0.4 H6.4 V7.4 H5.6 Z M0.2 4.4 H2.2 V5.8 H0.2 Z M2.6 1.6 H4.6 V3 H2.6 Z M5 3.4 H7 V4.8 H5 Z"/></g></svg>
<span class="t" style="left:45px;transform:perspective(1000px) translate3d(0.60px,0.61px,0.01px);top:279px;font-size:7px;line-height:7px;font-weight:400;color:#989898;letter-spacing:0.000px;">Servos</span>
<svg style="left:35.40px;top:279.33px;" width="7.6" height="8.2" viewBox="0 0 7.6 8.2"><g fill="#7c7c7c"><path d="M0.4 3 H6.8 V7 H0.4 Z M1.6 3 A2 2 0 0 1 5.6 3 Z M2.6 0.6 L6.4 0 L6.6 1 L3 1.6 Z"/></g></svg>
<span class="t" style="left:45px;transform:perspective(1000px) translate3d(0.60px,0.46px,0.01px);top:296px;font-size:7px;line-height:7px;font-weight:400;color:#989898;letter-spacing:0.000px;">Motoren</span>
<svg style="left:35.40px;top:296.18px;" width="7.6" height="8.2" viewBox="0 0 7.6 8.2"><g fill="#7c7c7c"><path d="M2.6 0.4 H4.4 V2.8 H5.2 Q6 2.8 6 3.6 V7.2 H1 V3.6 Q1 2.8 1.8 2.8 H2.6 Z"/></g></svg>
<span class="t" style="left:45px;transform:perspective(1000px) translate3d(0.60px,0.31px,0.01px);top:313px;font-size:7px;line-height:7px;font-weight:400;color:#989898;letter-spacing:0.000px;">OSD</span>
<svg style="left:35.40px;top:313.03px;" width="7.6" height="8.2" viewBox="0 0 7.6 8.2"><g fill="#7c7c7c"><path d="M0 1.6 H7.4 V6.4 H0 Z M0.8 2.4 V3.6 H2.4 V2.4 Z M3 2.4 V3.6 H4.4 V2.4 Z M5 2.4 V3.6 H6.6 V2.4 Z" fill-rule="evenodd"/></g></svg>
<span class="t" style="left:45px;transform:perspective(1000px) translate3d(0.60px,0.16px,0.01px);top:330px;font-size:7px;line-height:7px;font-weight:400;color:#989898;letter-spacing:0.000px;">Videosender</span>
<svg style="left:35.40px;top:329.88px;" width="7.6" height="8.2" viewBox="0 0 7.6 8.2"><g fill="#7c7c7c"><path d="M3.4 3 H4.2 V7 H3.4 Z M2.4 1.6 L2.9 2 Q2.4 3 2.9 4 L2.4 4.4 Q1.6 3 2.4 1.6 Z M5.2 1.6 L4.7 2 Q5.2 3 4.7 4 L5.2 4.4 Q6 3 5.2 1.6 Z M1.2 0.8 L1.7 1.2 Q0.8 3 1.7 4.8 L1.2 5.2 Q0 3 1.2 0.8 Z M6.4 0.8 L5.9 1.2 Q6.8 3 5.9 4.8 L6.4 5.2 Q7.6 3 6.4 0.8 Z"/></g></svg>
<span class="t" style="left:45px;transform:perspective(1000px) translate3d(0.60px,0.01px,0.01px);top:347px;font-size:7px;line-height:7px;font-weight:400;color:#989898;letter-spacing:0.000px;">LED Leiste</span>
<svg style="left:35.40px;top:346.73px;" width="7.6" height="8.2" viewBox="0 0 7.6 8.2"><g fill="#7c7c7c"><path d="M2 0.4 H5.2 Q5.8 0.4 5.8 1 V4.4 H1.4 V1 Q1.4 0.4 2 0.4 Z M2.4 5 H3 V7.4 H2.4 Z M4.2 5 H4.8 V7.4 H4.2 Z"/></g></svg>
<span class="t" style="left:45px;transform:perspective(1000px) translate3d(0.60px,0.86px,0.01px);top:363px;font-size:7px;line-height:7px;font-weight:400;color:#989898;letter-spacing:0.000px;">Sensoren</span>
<svg style="left:35.40px;top:363.58px;" width="7.6" height="8.2" viewBox="0 0 7.6 8.2"><g fill="#7c7c7c"><path d="M0 4 H2 L2.8 2 L3.8 6 L4.6 4 H7.4 V4.8 H5.2 L3.6 8 L2.6 4 L2.4 4.8 H0 Z"/></g></svg>
<span class="t" style="left:45px;transform:perspective(1000px) translate3d(0.60px,0.71px,0.01px);top:380px;font-size:7px;line-height:7px;font-weight:400;color:#989898;letter-spacing:0.000px;">Bodenstation Protokoll</span>
<svg style="left:35.40px;top:380.43px;" width="7.6" height="8.2" viewBox="0 0 7.6 8.2"><g fill="#7c7c7c"><path d="M0 1.4 H7.6 V6.4 H0 Z M0.8 2.2 V4 H3.4 V2.2 Z M4.2 2.4 V3 H6.8 V2.4 Z M4.2 3.6 V4.2 H6.8 V3.6 Z" fill-rule="evenodd"/></g></svg>
<span class="t" style="left:45px;transform:perspective(1000px) translate3d(0.60px,0.56px,0.01px);top:397px;font-size:7px;line-height:7px;font-weight:400;color:#989898;letter-spacing:0.000px;">Flugschreiber</span>
<svg style="left:35.40px;top:397.28px;" width="7.6" height="8.2" viewBox="0 0 7.6 8.2"><g fill="#7c7c7c"><path d="M1.6 0.4 H5.6 Q6.4 0.4 6.4 1.2 V6.6 Q6.4 7.4 5.6 7.4 H1.6 Q0.8 7.4 0.8 6.6 V1.2 Q0.8 0.4 1.6 0.4 Z M0 1.6 H0.6 V2.6 H0 Z M0 3.4 H0.6 V4.4 H0 Z M0 5.2 H0.6 V6.2 H0 Z M6.6 1.6 H7.2 V2.6 H6.6 Z M6.6 3.4 H7.2 V4.4 H6.6 Z M6.6 5.2 H7.2 V6.2 H6.6 Z"/></g></svg>
<span class="t" style="left:45px;transform:perspective(1000px) translate3d(0.60px,0.41px,0.01px);top:414px;font-size:7px;line-height:7px;font-weight:400;color:#989898;letter-spacing:0.000px;">Kommandozeile</span>
<svg style="left:35.40px;top:414.13px;" width="7.6" height="8.2" viewBox="0 0 7.6 8.2"><g fill="#7c7c7c"><path d="M0 0.8 H7.6 V6.8 H0 Z M0.7 2.2 V6.1 H6.9 V2.2 Z" fill-rule="evenodd"/></g></svg>
<span class="t" style="left:142px;transform:perspective(1000px) translate3d(0.80px,0.53px,0.01px);top:117px;font-size:11px;line-height:11px;font-weight:400;color:#e8e8e8;letter-spacing:-0.127px;">Modi</span>
<span class="t" style="left:965.90px;transform:perspective(1000px) translate3d(-50%,0.76px,0.01px);top:119px;font-size:5.4px;line-height:5.4px;font-weight:700;color:#1c1300;letter-spacing:0.000px;">WIKI</span>
<span class="t" style="left:146px;transform:perspective(1000px) translate3d(0.90px,0.31px,0.01px);top:145px;font-size:5.7px;line-height:5.7px;font-weight:400;color:#f0f0f0;letter-spacing:0.118px;">Konfiguration von Modi als Kombination aus Bereichen und/oder Verknüpfungen zu anderen Modi (Verknüpfungen werden ab BF 4.0 oder später unterstützt). Verwendung von <b>Bereichen</b> zur Definition der Schalter an der Fernsteuerung und deren Zuordnungen. Ein Empfängerkanal mit einem Wert innerhalb des</span>
<span class="t" style="left:146px;transform:perspective(1000px) translate3d(0.90px,0.01px,0.01px);top:153px;font-size:5.7px;line-height:5.7px;font-weight:400;color:#f0f0f0;letter-spacing:0.124px;">min/max-Bereiches aktiviert den Modus. Verwendung von <b>Verknüpfungen</b> zur Aktivierung eines Modus, während ein anderer Modus aktiv ist. <b>Ausnahmen:</b> ARM kann nicht zu bzw. mit einem anderen Modus verknüpft werden, Modi können nicht mit anderen Modi verknüpft werden, wenn diese ihrerseits als</span>
<span class="t" style="left:146px;transform:perspective(1000px) translate3d(0.90px,0.71px,0.01px);top:160px;font-size:5.7px;line-height:5.7px;font-weight:400;color:#f0f0f0;letter-spacing:0.107px;">Verknüpfung definiert sind (Verketten von Verknüpfungen). Es können mehrere Bereiche / Verknüpfungen verwendet werden, um einen Modus zu aktivieren. Falls für einen Modus mehr als ein Bereich / Verknüpfung definiert ist, können diese als <b>UND</b> oder <b>ODER</b> definiert werden. Ein Modus wird dann aktiviert,</span>
<span class="t" style="left:146px;transform:perspective(1000px) translate3d(0.90px,0.41px,0.01px);top:168px;font-size:5.7px;line-height:5.7px;font-weight:400;color:#f0f0f0;letter-spacing:0.000px;">wenn:</span>
<span class="t" style="left:146px;transform:perspective(1000px) translate3d(0.90px,0.11px,0.01px);top:176px;font-size:5.7px;line-height:5.7px;font-weight:400;color:#f0f0f0;letter-spacing:0.029px;">- ALLE <b>UND</b> Bereiche / Verknüpfungen aktiv sind; ODER</span>
<span class="t" style="left:146px;transform:perspective(1000px) translate3d(0.90px,0.81px,0.01px);top:183px;font-size:5.7px;line-height:5.7px;font-weight:400;color:#f0f0f0;letter-spacing:0.063px;">- mindestens ein <b>ODER</b> Bereich / Verknüpfung aktiv ist.</span>
<span class="t" style="left:146px;transform:perspective(1000px) translate3d(0.90px,0.21px,0.01px);top:199px;font-size:5.7px;line-height:5.7px;font-weight:400;color:#f0f0f0;letter-spacing:0.078px;">Unbedingt die Einstellung mittels 'Save' speichern.</span>
<span class="t" style="left:171px;transform:perspective(1000px) translate3d(0.60px,0.28px,0.01px);top:219px;font-size:7px;line-height:7px;font-weight:700;color:#f2f2f2;letter-spacing:-0.269px;">Nicht verwendete Modi ausblenden</span>
<span class="t" style="left:187.90px;transform:perspective(1000px) translate3d(-50%,0.02px,0.01px);top:236px;font-size:6.1px;line-height:6.1px;font-weight:700;color:#fff;letter-spacing:0.044px;-webkit-text-stroke:0.25px #fff;">ARM</span>
<span class="t" style="left:187.90px;transform:perspective(1000px) translate3d(-50%,0.09px,0.01px);top:269px;font-size:6.6px;line-height:6.6px;font-weight:700;color:#fff;letter-spacing:-0.131px;-webkit-text-stroke:0.15px #fff;">Bereich hinzufügen</span>
<span class="t" style="left:243px;transform:perspective(1000px) translate3d(0.80px,0.38px,0.01px);top:239px;font-size:7.2px;line-height:7.2px;font-weight:400;color:#f4f4f4;letter-spacing:-0.329px;-webkit-text-stroke:0.2px #f4f4f4;">AUX 2</span>
<svg style="left:268.90px;top:241.50px;" width="5" height="3.6" viewBox="0 0 5 3.6"><path d="M0.6 0.6 L2.5 2.7 L4.4 0.6" fill="none" stroke="#f0f0f0" stroke-width="1.3"/></svg>
<span class="t" style="left:258.60px;transform:perspective(1000px) translate3d(-50%,0.09px,0.01px);top:251px;font-size:6.6px;line-height:6.6px;font-weight:400;color:#e8e8e8;letter-spacing:0.000px;">Min: 1450</span>
<span class="t" style="left:258.60px;transform:perspective(1000px) translate3d(-50%,0.19px,0.01px);top:259px;font-size:6.6px;line-height:6.6px;font-weight:400;color:#e8e8e8;letter-spacing:0.000px;">Max: 2100</span>
<span class="t" style="left:292.50px;transform:perspective(1000px) translate3d(-50%,0.77px,0.01px);top:262px;font-size:6.3px;line-height:6.3px;font-weight:400;color:#d4d4d4;letter-spacing:0.000px;">900</span>
<span class="t" style="left:340.17px;transform:perspective(1000px) translate3d(-50%,0.77px,0.01px);top:262px;font-size:6.3px;line-height:6.3px;font-weight:400;color:#d4d4d4;letter-spacing:0.000px;">1000</span>
<span class="t" style="left:435.50px;transform:perspective(1000px) translate3d(-50%,0.77px,0.01px);top:262px;font-size:6.3px;line-height:6.3px;font-weight:400;color:#d4d4d4;letter-spacing:0.000px;">1200</span>
<span class="t" style="left:530.84px;transform:perspective(1000px) translate3d(-50%,0.77px,0.01px);top:262px;font-size:6.3px;line-height:6.3px;font-weight:400;color:#d4d4d4;letter-spacing:0.000px;">1400</span>
<span class="t" style="left:578.50px;transform:perspective(1000px) translate3d(-50%,0.77px,0.01px);top:262px;font-size:6.3px;line-height:6.3px;font-weight:400;color:#d4d4d4;letter-spacing:0.000px;">1500</span>
<span class="t" style="left:626.17px;transform:perspective(1000px) translate3d(-50%,0.77px,0.01px);top:262px;font-size:6.3px;line-height:6.3px;font-weight:400;color:#d4d4d4;letter-spacing:0.000px;">1600</span>
<span class="t" style="left:721.50px;transform:perspective(1000px) translate3d(-50%,0.77px,0.01px);top:262px;font-size:6.3px;line-height:6.3px;font-weight:400;color:#d4d4d4;letter-spacing:0.000px;">1800</span>
<span class="t" style="left:816.84px;transform:perspective(1000px) translate3d(-50%,0.77px,0.01px);top:262px;font-size:6.3px;line-height:6.3px;font-weight:400;color:#d4d4d4;letter-spacing:0.000px;">2000</span>
<span class="t" style="left:864.50px;transform:perspective(1000px) translate3d(-50%,0.77px,0.01px);top:262px;font-size:6.3px;line-height:6.3px;font-weight:400;color:#d4d4d4;letter-spacing:0.000px;">2100</span>
<svg style="left:967.60px;top:235.90px;" width="6.8" height="6.8" viewBox="0 0 6.8 6.8"><circle cx="3.4" cy="3.4" r="2.3" fill="none" stroke="#2c2c2c" stroke-width="1.9"/></svg>
<span class="t" style="left:187.90px;transform:perspective(1000px) translate3d(-50%,0.69px,0.01px);top:284px;font-size:6.1px;line-height:6.1px;font-weight:700;color:#fff;letter-spacing:-0.206px;-webkit-text-stroke:0.25px #fff;">ANGLE</span>
<span class="t" style="left:187.90px;transform:perspective(1000px) translate3d(-50%,0.26px,0.01px);top:305px;font-size:6.6px;line-height:6.6px;font-weight:700;color:#fff;letter-spacing:-0.093px;-webkit-text-stroke:0.15px #fff;">Link hinzufügen</span>
<span class="t" style="left:187.90px;transform:perspective(1000px) translate3d(-50%,0.76px,0.01px);top:317px;font-size:6.6px;line-height:6.6px;font-weight:700;color:#fff;letter-spacing:-0.131px;-webkit-text-stroke:0.15px #fff;">Bereich hinzufügen</span>
<span class="t" style="left:243px;transform:perspective(1000px) translate3d(0.80px,0.05px,0.01px);top:288px;font-size:7.2px;line-height:7.2px;font-weight:400;color:#f4f4f4;letter-spacing:-0.329px;-webkit-text-stroke:0.2px #f4f4f4;">AUX 1</span>
<svg style="left:268.90px;top:290.17px;" width="5" height="3.6" viewBox="0 0 5 3.6"><path d="M0.6 0.6 L2.5 2.7 L4.4 0.6" fill="none" stroke="#f0f0f0" stroke-width="1.3"/></svg>
<span class="t" style="left:258.60px;transform:perspective(1000px) translate3d(-50%,0.76px,0.01px);top:299px;font-size:6.6px;line-height:6.6px;font-weight:400;color:#e8e8e8;letter-spacing:0.000px;">Min: 900</span>
<span class="t" style="left:258.60px;transform:perspective(1000px) translate3d(-50%,0.86px,0.01px);top:307px;font-size:6.6px;line-height:6.6px;font-weight:400;color:#e8e8e8;letter-spacing:0.000px;">Max: 2100</span>
<span class="t" style="left:292.50px;transform:perspective(1000px) translate3d(-50%,0.44px,0.01px);top:311px;font-size:6.3px;line-height:6.3px;font-weight:400;color:#d4d4d4;letter-spacing:0.000px;">900</span>
<span class="t" style="left:340.17px;transform:perspective(1000px) translate3d(-50%,0.44px,0.01px);top:311px;font-size:6.3px;line-height:6.3px;font-weight:400;color:#d4d4d4;letter-spacing:0.000px;">1000</span>
<span class="t" style="left:435.50px;transform:perspective(1000px) translate3d(-50%,0.44px,0.01px);top:311px;font-size:6.3px;line-height:6.3px;font-weight:400;color:#d4d4d4;letter-spacing:0.000px;">1200</span>
<span class="t" style="left:530.84px;transform:perspective(1000px) translate3d(-50%,0.44px,0.01px);top:311px;font-size:6.3px;line-height:6.3px;font-weight:400;color:#d4d4d4;letter-spacing:0.000px;">1400</span>
<span class="t" style="left:578.50px;transform:perspective(1000px) translate3d(-50%,0.44px,0.01px);top:311px;font-size:6.3px;line-height:6.3px;font-weight:400;color:#d4d4d4;letter-spacing:0.000px;">1500</span>
<span class="t" style="left:626.17px;transform:perspective(1000px) translate3d(-50%,0.44px,0.01px);top:311px;font-size:6.3px;line-height:6.3px;font-weight:400;color:#d4d4d4;letter-spacing:0.000px;">1600</span>
<span class="t" style="left:721.50px;transform:perspective(1000px) translate3d(-50%,0.44px,0.01px);top:311px;font-size:6.3px;line-height:6.3px;font-weight:400;color:#d4d4d4;letter-spacing:0.000px;">1800</span>
<span class="t" style="left:816.84px;transform:perspective(1000px) translate3d(-50%,0.44px,0.01px);top:311px;font-size:6.3px;line-height:6.3px;font-weight:400;color:#d4d4d4;letter-spacing:0.000px;">2000</span>
<span class="t" style="left:864.50px;transform:perspective(1000px) translate3d(-50%,0.44px,0.01px);top:311px;font-size:6.3px;line-height:6.3px;font-weight:400;color:#d4d4d4;letter-spacing:0.000px;">2100</span>
<svg style="left:967.60px;top:284.57px;" width="6.8" height="6.8" viewBox="0 0 6.8 6.8"><circle cx="3.4" cy="3.4" r="2.3" fill="none" stroke="#2c2c2c" stroke-width="1.9"/></svg>
<span class="t" style="left:187.90px;transform:perspective(1000px) translate3d(-50%,0.36px,0.01px);top:333px;font-size:6.1px;line-height:6.1px;font-weight:700;color:#fff;letter-spacing:0.045px;-webkit-text-stroke:0.25px #fff;">HORIZON</span>
<span class="t" style="left:187.90px;transform:perspective(1000px) translate3d(-50%,0.93px,0.01px);top:353px;font-size:6.6px;line-height:6.6px;font-weight:700;color:#fff;letter-spacing:-0.093px;-webkit-text-stroke:0.15px #fff;">Link hinzufügen</span>
<span class="t" style="left:187.90px;transform:perspective(1000px) translate3d(-50%,0.43px,0.01px);top:366px;font-size:6.6px;line-height:6.6px;font-weight:700;color:#fff;letter-spacing:-0.131px;-webkit-text-stroke:0.15px #fff;">Bereich hinzufügen</span>
<span class="t" style="left:187.90px;transform:perspective(1000px) translate3d(-50%,0.03px,0.01px);top:382px;font-size:6.1px;line-height:6.1px;font-weight:700;color:#fff;letter-spacing:-0.351px;-webkit-text-stroke:0.25px #fff;">HEADFREE</span>
<span class="t" style="left:187.90px;transform:perspective(1000px) translate3d(-50%,0.60px,0.01px);top:402px;font-size:6.6px;line-height:6.6px;font-weight:700;color:#fff;letter-spacing:-0.093px;-webkit-text-stroke:0.15px #fff;">Link hinzufügen</span>
<span class="t" style="left:187.90px;transform:perspective(1000px) translate3d(-50%,0.10px,0.01px);top:415px;font-size:6.6px;line-height:6.6px;font-weight:700;color:#fff;letter-spacing:-0.131px;-webkit-text-stroke:0.15px #fff;">Bereich hinzufügen</span>
<span class="t" style="left:187.90px;transform:perspective(1000px) translate3d(-50%,0.70px,0.01px);top:430px;font-size:6.1px;line-height:6.1px;font-weight:700;color:#fff;letter-spacing:0.000px;-webkit-text-stroke:0.25px #fff;">FAILSAFE</span>
<span class="t" style="left:187.90px;transform:perspective(1000px) translate3d(-50%,0.27px,0.01px);top:451px;font-size:6.6px;line-height:6.6px;font-weight:700;color:#fff;letter-spacing:-0.093px;-webkit-text-stroke:0.15px #fff;">Link hinzufügen</span>
<span class="t" style="left:187.90px;transform:perspective(1000px) translate3d(-50%,0.77px,0.01px);top:463px;font-size:6.6px;line-height:6.6px;font-weight:700;color:#fff;letter-spacing:-0.131px;-webkit-text-stroke:0.15px #fff;">Bereich hinzufügen</span>
<span class="t" style="left:187.90px;transform:perspective(1000px) translate3d(-50%,0.37px,0.01px);top:479px;font-size:6.1px;line-height:6.1px;font-weight:700;color:#fff;letter-spacing:0.000px;-webkit-text-stroke:0.25px #fff;">HEADADJ</span>
<span class="t" style="left:187.90px;transform:perspective(1000px) translate3d(-50%,0.94px,0.01px);top:499px;font-size:6.6px;line-height:6.6px;font-weight:700;color:#fff;letter-spacing:-0.093px;-webkit-text-stroke:0.15px #fff;">Link hinzufügen</span>
<span class="t" style="left:187.90px;transform:perspective(1000px) translate3d(-50%,0.44px,0.01px);top:512px;font-size:6.6px;line-height:6.6px;font-weight:700;color:#fff;letter-spacing:-0.131px;-webkit-text-stroke:0.15px #fff;">Bereich hinzufügen</span>
<span class="t" style="left:187.90px;transform:perspective(1000px) translate3d(-50%,0.04px,0.01px);top:528px;font-size:6.1px;line-height:6.1px;font-weight:700;color:#fff;letter-spacing:0.000px;-webkit-text-stroke:0.25px #fff;">BEEPER</span>
<span class="t" style="left:187.90px;transform:perspective(1000px) translate3d(-50%,0.61px,0.01px);top:548px;font-size:6.6px;line-height:6.6px;font-weight:700;color:#fff;letter-spacing:-0.093px;-webkit-text-stroke:0.15px #fff;">Link hinzufügen</span>
<span class="t" style="left:187.90px;transform:perspective(1000px) translate3d(-50%,0.11px,0.01px);top:561px;font-size:6.6px;line-height:6.6px;font-weight:700;color:#fff;letter-spacing:-0.131px;-webkit-text-stroke:0.15px #fff;">Bereich hinzufügen</span>
<span class="t" style="left:243px;transform:perspective(1000px) translate3d(0.80px,0.40px,0.01px);top:531px;font-size:7.2px;line-height:7.2px;font-weight:400;color:#f4f4f4;letter-spacing:-0.329px;-webkit-text-stroke:0.2px #f4f4f4;">AUX 3</span>
<svg style="left:268.90px;top:533.52px;" width="5" height="3.6" viewBox="0 0 5 3.6"><path d="M0.6 0.6 L2.5 2.7 L4.4 0.6" fill="none" stroke="#f0f0f0" stroke-width="1.3"/></svg>
<span class="t" style="left:258.60px;transform:perspective(1000px) translate3d(-50%,0.11px,0.01px);top:543px;font-size:6.6px;line-height:6.6px;font-weight:400;color:#e8e8e8;letter-spacing:0.000px;">Min: 1950</span>
<span class="t" style="left:258.60px;transform:perspective(1000px) translate3d(-50%,0.21px,0.01px);top:551px;font-size:6.6px;line-height:6.6px;font-weight:400;color:#e8e8e8;letter-spacing:0.000px;">Max: 2050</span>
<span class="t" style="left:292.50px;transform:perspective(1000px) translate3d(-50%,0.79px,0.01px);top:554px;font-size:6.3px;line-height:6.3px;font-weight:400;color:#d4d4d4;letter-spacing:0.000px;">900</span>
<span class="t" style="left:340.17px;transform:perspective(1000px) translate3d(-50%,0.79px,0.01px);top:554px;font-size:6.3px;line-height:6.3px;font-weight:400;color:#d4d4d4;letter-spacing:0.000px;">1000</span>
<span class="t" style="left:435.50px;transform:perspective(1000px) translate3d(-50%,0.79px,0.01px);top:554px;font-size:6.3px;line-height:6.3px;font-weight:400;color:#d4d4d4;letter-spacing:0.000px;">1200</span>
<span class="t" style="left:530.84px;transform:perspective(1000px) translate3d(-50%,0.79px,0.01px);top:554px;font-size:6.3px;line-height:6.3px;font-weight:400;color:#d4d4d4;letter-spacing:0.000px;">1400</span>
<span class="t" style="left:578.50px;transform:perspective(1000px) translate3d(-50%,0.79px,0.01px);top:554px;font-size:6.3px;line-height:6.3px;font-weight:400;color:#d4d4d4;letter-spacing:0.000px;">1500</span>
<span class="t" style="left:626.17px;transform:perspective(1000px) translate3d(-50%,0.79px,0.01px);top:554px;font-size:6.3px;line-height:6.3px;font-weight:400;color:#d4d4d4;letter-spacing:0.000px;">1600</span>
<span class="t" style="left:721.50px;transform:perspective(1000px) translate3d(-50%,0.79px,0.01px);top:554px;font-size:6.3px;line-height:6.3px;font-weight:400;color:#d4d4d4;letter-spacing:0.000px;">1800</span>
<span class="t" style="left:816.84px;transform:perspective(1000px) translate3d(-50%,0.79px,0.01px);top:554px;font-size:6.3px;line-height:6.3px;font-weight:400;color:#d4d4d4;letter-spacing:0.000px;">2000</span>
<span class="t" style="left:864.50px;transform:perspective(1000px) translate3d(-50%,0.79px,0.01px);top:554px;font-size:6.3px;line-height:6.3px;font-weight:400;color:#d4d4d4;letter-spacing:0.000px;">2100</span>
<svg style="left:967.60px;top:527.92px;" width="6.8" height="6.8" viewBox="0 0 6.8 6.8"><circle cx="3.4" cy="3.4" r="2.3" fill="none" stroke="#2c2c2c" stroke-width="1.9"/></svg>
<span class="t" style="left:187.90px;transform:perspective(1000px) translate3d(-50%,0.71px,0.01px);top:576px;font-size:6.1px;line-height:6.1px;font-weight:700;color:#fff;letter-spacing:0.000px;-webkit-text-stroke:0.25px #fff;">LEDLOW</span>
<span class="t" style="left:187.90px;transform:perspective(1000px) translate3d(-50%,0.28px,0.01px);top:597px;font-size:6.6px;line-height:6.6px;font-weight:700;color:#fff;letter-spacing:-0.093px;-webkit-text-stroke:0.15px #fff;">Link hinzufügen</span>
<span class="t" style="left:187.90px;transform:perspective(1000px) translate3d(-50%,0.78px,0.01px);top:609px;font-size:6.6px;line-height:6.6px;font-weight:700;color:#fff;letter-spacing:-0.131px;-webkit-text-stroke:0.15px #fff;">Bereich hinzufügen</span>
<span class="t" style="left:187.90px;transform:perspective(1000px) translate3d(-50%,0.38px,0.01px);top:625px;font-size:6.1px;line-height:6.1px;font-weight:700;color:#fff;letter-spacing:-0.253px;-webkit-text-stroke:0.25px #fff;">OSD DISABLE</span>
<span class="t" style="left:964.80px;transform:perspective(1000px) translate3d(-50%,0.89px,0.01px);top:642px;font-size:6.4px;line-height:6.4px;font-weight:700;color:#1c1500;letter-spacing:-0.107px;-webkit-text-stroke:0.15px #1c1500;">Speichern</span>
<span class="t" style="left:33px;transform:perspective(1000px) translate3d(0.90px,0.65px,0.01px);top:661px;font-size:6.3px;line-height:6.3px;font-weight:400;color:#f0f0f0;letter-spacing:-0.064px;">Port-Auslastung: D: 30 % U: 2 %</span>
<span class="t" style="left:134px;transform:perspective(1000px) translate3d(0.70px,0.65px,0.01px);top:661px;font-size:6.3px;line-height:6.3px;font-weight:400;color:#f0f0f0;letter-spacing:-0.073px;">Paket-Fehler: 0</span>
<span class="t" style="left:188px;transform:perspective(1000px) translate3d(0.00px,0.65px,0.01px);top:661px;font-size:6.3px;line-height:6.3px;font-weight:400;color:#f0f0f0;letter-spacing:-0.140px;">I2C-Fehler: 0</span>
<span class="t" style="left:234px;transform:perspective(1000px) translate3d(0.00px,0.65px,0.01px);top:661px;font-size:6.3px;line-height:6.3px;font-weight:400;color:#f0f0f0;letter-spacing:0.014px;">Zykluszeit: 247</span>
<span class="t" style="left:286px;transform:perspective(1000px) translate3d(0.60px,0.65px,0.01px);top:661px;font-size:6.3px;line-height:6.3px;font-weight:400;color:#f0f0f0;letter-spacing:-0.103px;">CPU-Auslastung: 32 %</span>
<span class="t" style="right:34.70px;transform:perspective(1000px) translate3d(0,0.65px,0.01px);top:661px;font-size:6.3px;line-height:6.3px;font-weight:400;color:#f0f0f0;letter-spacing:-0.136px;">Konfigurator: 10.9.0 (697943b) , Firmware: 4.3.1 BTFL , Ziel: IFRC/IFLIGHT_BLITZ_F722_X1</span>
</div>
</body></html>
